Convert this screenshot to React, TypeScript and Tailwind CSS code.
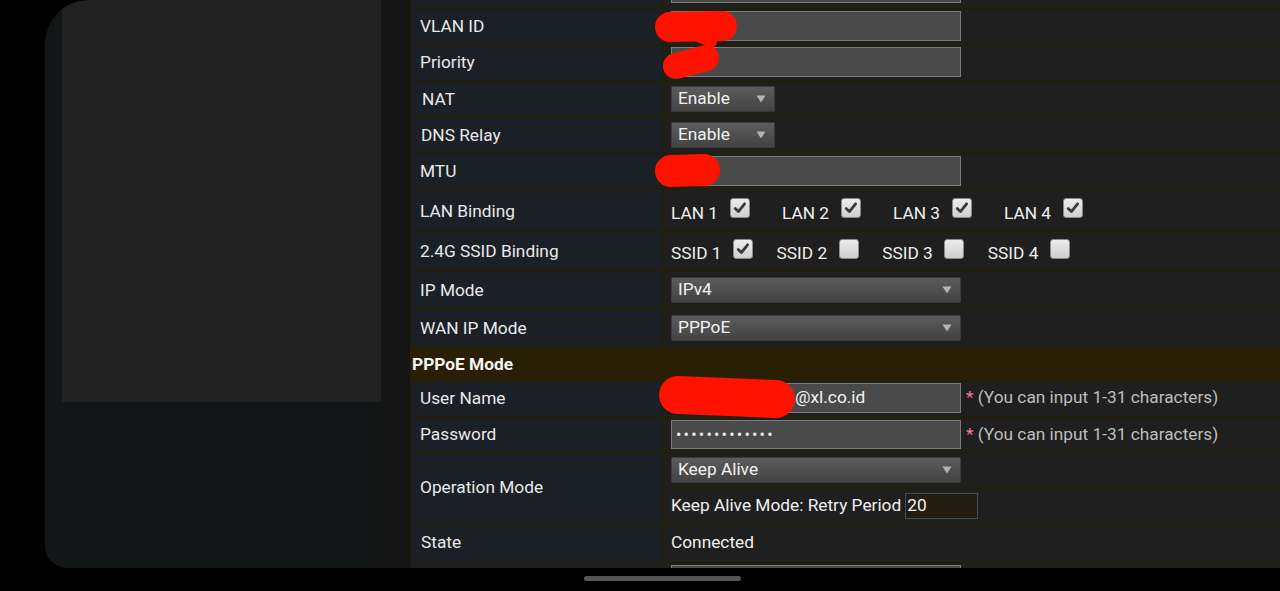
import React from "react";

const FONT = "font-['Roboto',sans-serif]";

function Arrow() {
  return (
    <svg width="10" height="8" viewBox="0 0 10 8" className="shrink-0">
      <path d="M0.5 0.5 L9.5 0.5 L5 7.5 Z" fill="#b4b4b4" />
    </svg>
  );
}

function Select({ w, text }: { w: string; text: string }) {
  return (
    <div
      className={`${w} h-[26px] flex items-center justify-between pl-[6px] pr-[8px] bg-gradient-to-b from-[#5c5c5c] to-[#434343] border border-[#3a3a3a] rounded-[1px] text-[#f2f2f2]`}
    >
      <span>{text}</span>
      <Arrow />
    </div>
  );
}

function TextInput({ children }: { children?: React.ReactNode }) {
  return (
    <div className="w-[290px] h-[30px] bg-[#4a4a4a] border border-[#7c7c7c] flex items-center pl-[7px] text-[#f2f2f2] whitespace-nowrap">
      {children}
    </div>
  );
}

function Check({ on }: { on: boolean }) {
  return (
    <div className="w-[20px] h-[20px] rounded-[3px] border border-[#8a8a8a] bg-gradient-to-b from-[#ececec] to-[#cfcfcf] flex items-center justify-center shrink-0 mb-[11px]">
      {on && (
        <svg width="16" height="16" viewBox="0 0 16 16">
          <path d="M3.2 8.6 L6.4 11.6 L12.6 3.8" fill="none" stroke="#3a3a3a" strokeWidth="2.8" strokeLinecap="round" strokeLinejoin="round" />
        </svg>
      )}
    </div>
  );
}

function Row({
  label,
  h,
  children,
  valueClass = "items-center",
  labelClass = "pl-[8px]",
}: {
  label: string;
  h: string;
  children?: React.ReactNode;
  valueClass?: string;
  labelClass?: string;
}) {
  return (
    <div className={`flex gap-[2px] ${h} shrink-0`}>
      <div className={`w-[250px] shrink-0 bg-[#1b1f26] flex items-center ${labelClass} text-[#e9e9e9]`}>
        {label}
      </div>
      <div className={`flex-1 bg-[#1f1f1f] pl-[7px] flex ${valueClass}`}>{children}</div>
    </div>
  );
}

function Hint() {
  return (
    <span className="ml-[5px] whitespace-nowrap">
      <span className="text-[#ff6fa8]">*</span>
      <span className="text-[#bdbdbd]"> (You can input 1-31 characters)</span>
    </span>
  );
}

export default function App() {
  const lan = ["LAN 1", "LAN 2", "LAN 3", "LAN 4"];
  const ssid = ["SSID 1", "SSID 2", "SSID 3", "SSID 4"];
  return (
    <div className={`relative w-[1280px] h-[591px] bg-black overflow-hidden flex flex-col ${FONT} text-[17.3px] leading-none`}>
      <div className="flex h-[568px] shrink-0">
        <div className="w-[45px] shrink-0 bg-black" />
        <div className="flex-1 flex rounded-tl-[44px] rounded-bl-[22px] overflow-hidden">
          {/* left side panel */}
          <div className="w-[17px] shrink-0 bg-[#121617]" />
          <div className="w-[319px] shrink-0 flex flex-col">
            <div className="h-[402px] bg-[#212121]" />
            <div className="flex-1 bg-[#121617]" />
          </div>
          <div className="w-[29px] shrink-0 bg-[#151515]" />
          {/* table */}
          <div className="flex-1 bg-[#231d0b] pl-[2px] flex flex-col gap-[2px] overflow-hidden">
            <Row label="" h="h-[8px]" valueClass="items-start">
              <div className="w-[290px] h-[3px] bg-[#4a4a4a] border-x border-b border-[#7c7c7c]" />
            </Row>
            <Row label="VLAN ID" h="h-[34px]" valueClass="items-start pt-[1px]">
              <TextInput />
            </Row>
            <Row label="Priority" h="h-[34px]" valueClass="items-start pt-[1px]">
              <TextInput />
            </Row>
            <Row label="NAT" h="h-[34px]" labelClass="pl-[10px] pt-[2px]">
              <Select w="w-[104px]" text="Enable" />
            </Row>
            <Row label="DNS Relay" h="h-[34px]" labelClass="pl-[9px] pt-[1px]">
              <Select w="w-[104px]" text="Enable" />
            </Row>
            <Row label="MTU" h="h-[34px]" valueClass="items-start pt-[2px]" labelClass="pl-[8px] pt-[2px]">
              <TextInput />
            </Row>
            <Row label="LAN Binding" h="h-[40px]" valueClass="items-center pt-[7px]" labelClass="pl-[8px] pt-[4px]">
              {lan.map((t) => (
                <div key={t} className="w-[111px] shrink-0 flex items-center">
                  <span className="w-[59px] shrink-0 text-[#efefef]">{t}</span>
                  <Check on={true} />
                </div>
              ))}
            </Row>
            <Row label="2.4G SSID Binding" h="h-[38px]" valueClass="items-center pt-[6px]" labelClass="pl-[8px] pt-[2px]">
              {ssid.map((t, i) => (
                <div key={t} className="w-[105.6px] shrink-0 flex items-center">
                  <span className="w-[62px] shrink-0 text-[#efefef]">{t}</span>
                  <Check on={i === 0} />
                </div>
              ))}
            </Row>
            <Row label="IP Mode" h="h-[36px]" labelClass="pl-[8px] pt-[2px]">
              <Select w="w-[290px]" text="IPv4" />
            </Row>
            <Row label="WAN IP Mode" h="h-[36px]" labelClass="pl-[8px] pt-[2px]">
              <Select w="w-[290px]" text="PPPoE" />
            </Row>
            <div className="h-[32px] shrink-0 -ml-[2px] bg-[#281f05] flex items-center pl-[2px] pt-[2px] font-bold text-[#f5f5f5]">
              PPPoE Mode
            </div>
            <Row label="User Name" h="h-[34px]" valueClass="items-start pt-[1px]">
              <TextInput>
                <span className="inline-block w-[116px] shrink-0">abcdefgh</span>
                <span>@xl.co.id</span>
              </TextInput>
              <div className="h-[30px] flex items-center">
                <Hint />
              </div>
            </Row>
            <Row label="Password" h="h-[34px]" valueClass="items-start pt-[2px]">
              <div className="w-[290px] h-[29px] bg-[#4a4a4a] border border-[#7c7c7c] flex items-center pl-[4px] text-[#f2f2f2] text-[16px] tracking-[2.2px]">
                •••••••••••••
              </div>
              <div className="h-[29px] flex items-center">
                <Hint />
              </div>
            </Row>
            <div className="flex gap-[2px] h-[69px] shrink-0">
              <div className="w-[250px] shrink-0 bg-[#1b1f26] flex items-center pl-[8px] pb-[2px] text-[#e9e9e9]">
                Operation Mode
              </div>
              <div className="flex-1 flex flex-col gap-[2px]">
                <div className="h-[33px] bg-[#1f1f1f] pl-[7px] flex items-start pt-[3px]">
                  <Select w="w-[290px]" text="Keep Alive" />
                </div>
                <div className="flex-1 bg-[#1f1f1f] pl-[7px] flex items-center">
                  <span className="text-[#efefef] whitespace-nowrap">Keep Alive Mode: Retry Period</span>
                  <div className="ml-[4px] w-[73px] h-[26px] bg-[#221d10] border border-[#3b4f66] flex items-center pl-[1px] text-[#f2f2f2]">
                    20
                  </div>
                </div>
              </div>
            </div>
            <Row label="State" h="h-[36px]" labelClass="pl-[9px]">
              <span className="text-[#efefef]">Connected</span>
            </Row>
            <Row label="" h="h-[20px]" valueClass="items-start pt-[2px]">
              <div className="w-[290px] h-[20px] bg-[#4a4a4a] border border-[#7c7c7c]" />
            </Row>
          </div>
        </div>
      </div>
      {/* gesture bar */}
      <div className="flex-1 flex items-center justify-center pl-[45px]">
        <div className="w-[157px] h-[5px] rounded-full bg-[#555555] mt-[-2px]" />
      </div>

      {/* red redaction marks */}
      <svg className="absolute inset-0 pointer-events-none" width="1280" height="591" viewBox="0 0 1280 591">
        <g stroke="#ff1300" strokeLinecap="round" strokeLinejoin="round" fill="none">
          <path d="M670 27 L722 26" strokeWidth="30" />
          <path d="M700 38 L712 42" strokeWidth="10" />
          <path d="M676 66 L706 58" strokeWidth="26" />
          <path d="M671 171 L704 170" strokeWidth="32" />
          <path d="M678 395 L776 399" strokeWidth="38" />
        </g>
      </svg>
    </div>
  );
}
